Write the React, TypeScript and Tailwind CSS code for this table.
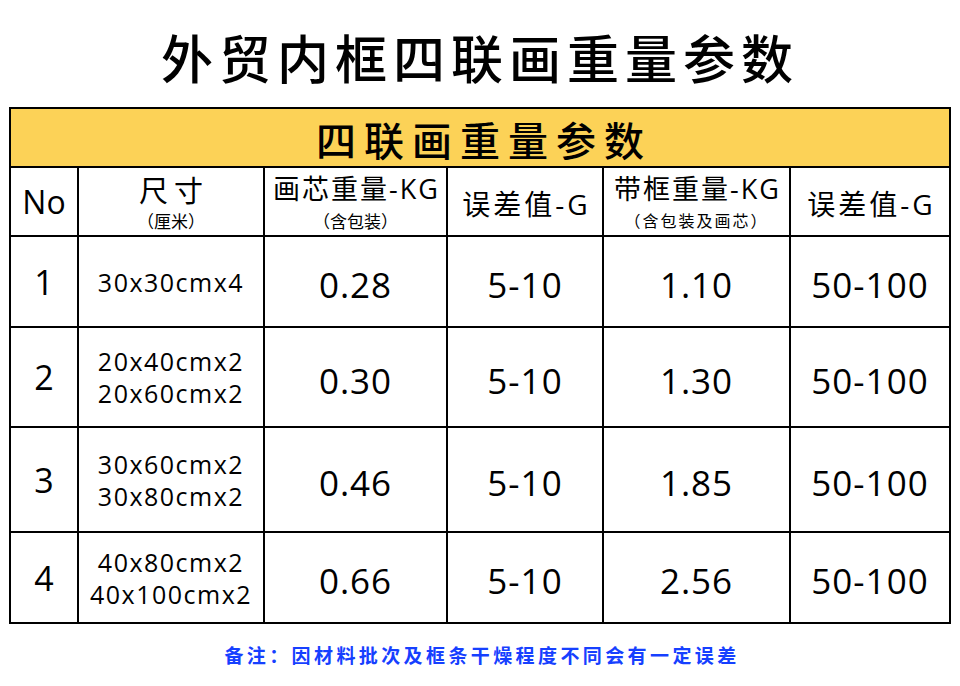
const cjk = "font-['Noto_Sans_CJK_SC',sans-serif]";
const latin = "font-['Open_Sans','Noto_Sans_CJK_SC',sans-serif]";

interface Row {
  no: string;
  sizes: string[];
  core: string;
  coreErr: string;
  framed: string;
  framedErr: string;
}

const rows: Row[] = [
  { no: "1", sizes: ["30x30cmx4"], core: "0.28", coreErr: "5-10", framed: "1.10", framedErr: "50-100" },
  { no: "2", sizes: ["20x40cmx2", "20x60cmx2"], core: "0.30", coreErr: "5-10", framed: "1.30", framedErr: "50-100" },
  { no: "3", sizes: ["30x60cmx2", "30x80cmx2"], core: "0.46", coreErr: "5-10", framed: "1.85", framedErr: "50-100" },
  { no: "4", sizes: ["40x80cmx2", "40x100cmx2"], core: "0.66", coreErr: "5-10", framed: "2.56", framedErr: "50-100" },
];

function Cell({ children, className = "" }: { children: React.ReactNode; className?: string }) {
  return (
    <div
      className={`flex flex-col items-center justify-center whitespace-nowrap bg-white text-black ${className}`}
    >
      {children}
    </div>
  );
}

export default function App() {
  return (
    <div className={`w-[960px] h-[686px] bg-white flex flex-col ${latin}`}>
      <h1
        className={`h-[107px] pt-[6px] flex items-center justify-center text-[52px] leading-none font-medium tracking-[6px] text-black ${cjk}`}
      >
        外贸内框四联画重量参数
      </h1>

      {/* table: black background + 2px gaps draw the grid lines */}
      <div className="ml-[9px] self-start border-2 border-black bg-black grid gap-[2px] grid-cols-[66px_184px_181px_154px_185px_158px] grid-rows-[57px_67px_89px_98px_103px_89px]">
        <div
          className={`col-span-6 flex items-center justify-center bg-[#fcd257] text-[40px] leading-none font-medium tracking-[8px] pl-[8px] pt-[2px] text-black ${cjk}`}
        >
          四联画重量参数
        </div>

        <Cell>
          <span className="text-[32px] leading-none">No</span>
        </Cell>
        <Cell>
          <span className={`text-[29px] leading-[38px] tracking-[6px] pl-[6px] ${cjk}`}>尺寸</span>
          <span className={`text-[17px] leading-[25px] ${cjk}`}>（厘米）</span>
        </Cell>
        <Cell>
          <span className="text-[27px] leading-[38px] tracking-[2px] pl-[2px]">画芯重量-KG</span>
          <span className={`text-[17px] leading-[25px] ${cjk}`}>（含包装）</span>
        </Cell>
        <Cell>
          <span className="text-[28px] leading-none tracking-[3px] pl-[3px] pt-[4px]">误差值-G</span>
        </Cell>
        <Cell>
          <span className="text-[27px] leading-[38px] tracking-[2px] pl-[2px]">带框重量-KG</span>
          <span className={`text-[16px] leading-[25px] tracking-[2px] ${cjk}`}>（含包装及画芯）</span>
        </Cell>
        <Cell>
          <span className="text-[28px] leading-none tracking-[3px] pl-[3px] pt-[4px]">误差值-G</span>
        </Cell>

        {rows.map((r) => (
          <div key={r.no} className="contents">
            <Cell>
              <span className="text-[34px] leading-none">{r.no}</span>
            </Cell>
            <Cell>
              {r.sizes.map((s) => (
                <span key={s} className="text-[25px] leading-[32px] tracking-[1.5px]">
                  {s}
                </span>
              ))}
            </Cell>
            <Cell>
              <span className="text-[35px] leading-none tracking-[1px] pt-[6px]">{r.core}</span>
            </Cell>
            <Cell>
              <span className="text-[35px] leading-none tracking-[1px] pt-[6px]">{r.coreErr}</span>
            </Cell>
            <Cell>
              <span className="text-[35px] leading-none tracking-[1px] pt-[6px]">{r.framed}</span>
            </Cell>
            <Cell>
              <span className="text-[35px] leading-none tracking-[1px] pt-[6px]">{r.framedErr}</span>
            </Cell>
          </div>
        ))}
      </div>

      <p
        className={`mt-[21px] pl-[4px] text-center text-[19px] leading-[19px] font-bold tracking-[3.4px] text-[#1640ff] ${cjk}`}
      >
        备注：因材料批次及框条干燥程度不同会有一定误差
      </p>
    </div>
  );
}
